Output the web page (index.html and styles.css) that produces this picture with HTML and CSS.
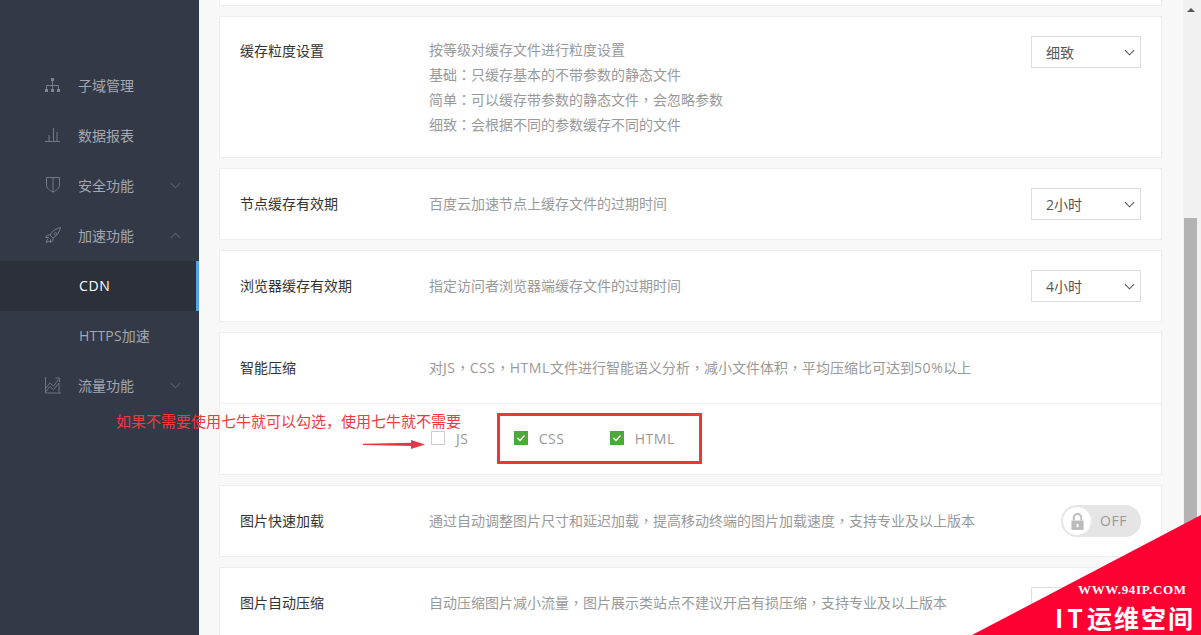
FILE: index.html
```html
<!DOCTYPE html>
<html lang="zh-CN">
<head>
<meta charset="utf-8">
<title>CDN</title>
<link rel="stylesheet" href="styles.css">
</head>
<body>
<div class="app">
  <nav class="sidebar">
    <a class="nav-item"><svg class="nav-icon" viewBox="0 0 16 18"><path d="M6 2h3v3H6zM0 13h3v3H0zM6 13h3v3H6zM12 13h3v3h-3z" fill="#7f8590"/><path d="M7.500 5v8M1.500 13V9.500h12V13" fill="none" stroke="#7f8590" stroke-width=".9"/></svg><span>子域管理</span></a>
    <a class="nav-item"><svg class="nav-icon" viewBox="0 0 16 18"><path d="M0 15.500h15M4 15V9M8.500 15V2M12 15V6" fill="none" stroke="#747a86"/></svg><span>数据报表</span></a>
    <a class="nav-item"><svg class="nav-icon" viewBox="0 0 16 18"><path d="M1.500 1.500h13v7.500c0 3-3 5.500-6.500 7C4.500 14.500 1.500 12 1.500 9zM8 1.500V16" fill="none" stroke="#747a86"/></svg><span>安全功能</span><svg class="chevron" viewBox="0 0 12 7"><path d="M1 1l5 5 5-5" fill="none" stroke="#596070" stroke-width="1.200"/></svg></a>
    <a class="nav-item"><svg class="nav-icon" viewBox="0 0 16 18"><path d="M15.500 1.500C10.500 2.500 7 5.500 5 9l3 3c3.500-2 6.500-5.500 7.500-10.500zM5 9H2.500L0.500 11.500h3.300M8 12v2.500L5.500 16.500v-3.300M3 12.500L1 16.500l4-1.500M10.500 6.500a1.300 1.300 0 1 0 .1 0z" fill="none" stroke="#747a86"/></svg><span>加速功能</span><svg class="chevron" viewBox="0 0 12 7"><path d="M1 6l5-5 5 5" fill="none" stroke="#596070" stroke-width="1.200"/></svg></a>
    <a class="nav-item nav-active"><span class="en">CDN</span></a>
    <a class="nav-item nav-sub"><span><span class="en">HTTPS</span>加速</span></a>
    <a class="nav-item"><svg class="nav-icon" viewBox="0 0 16 18"><path d="M0.500 1v16h15.500M1 12l4-5 3.500 3 5-6.500M1 15.500l4-5 3.500 3 5.500-6.500v9.500M10.500 2h4v4" fill="none" stroke="#747a86" stroke-width=".9"/></svg><span>流量功能</span><svg class="chevron" viewBox="0 0 12 7"><path d="M1 1l5 5 5-5" fill="none" stroke="#596070" stroke-width="1.200"/></svg></a>
  </nav>

  <main class="content">
    <div class="card card-stub"></div>

    <section class="card">
      <div class="row row-top row-tall">
        <h3 class="label">缓存粒度设置</h3>
        <div class="desc desc-lines">
          <p>按等级对缓存文件进行粒度设置</p>
          <p>基础<span class="pn" lang="zh-TW">：</span>只缓存基本的不带参数的静态文件</p>
          <p>简单<span class="pn" lang="zh-TW">：</span>可以缓存带参数的静态文件<span class="pn" lang="zh-TW">，</span>会忽略参数</p>
          <p>细致<span class="pn" lang="zh-TW">：</span>会根据不同的参数缓存不同的文件</p>
        </div>
        <div class="select"><span>细致</span><svg class="select-arrow" viewBox="0 0 12 7"><path d="M1 1l5 5 5-5" fill="none" stroke="#555" stroke-width="1.200"/></svg></div>
      </div>
    </section>

    <section class="card">
      <div class="row">
        <h3 class="label">节点缓存有效期</h3>
        <div class="desc"><p>百度云加速节点上缓存文件的过期时间</p></div>
        <div class="select"><span>2小时</span><svg class="select-arrow" viewBox="0 0 12 7"><path d="M1 1l5 5 5-5" fill="none" stroke="#555" stroke-width="1.200"/></svg></div>
      </div>
    </section>

    <section class="card">
      <div class="row">
        <h3 class="label">浏览器缓存有效期</h3>
        <div class="desc"><p>指定访问者浏览器端缓存文件的过期时间</p></div>
        <div class="select"><span>4小时</span><svg class="select-arrow" viewBox="0 0 12 7"><path d="M1 1l5 5 5-5" fill="none" stroke="#555" stroke-width="1.200"/></svg></div>
      </div>
    </section>

    <section class="card">
      <div class="row row-plain">
        <h3 class="label">智能压缩</h3>
        <div class="desc"><p>对<span class="en">JS</span><span class="pn" lang="zh-TW">，</span><span class="en">CSS</span><span class="pn" lang="zh-TW">，</span><span class="en">HTML</span>文件进行智能语义分析<span class="pn" lang="zh-TW">，</span>减小文件体积<span class="pn" lang="zh-TW">，</span>平均压缩比可达到<span class="en">50%</span>以上</p></div>
      </div>
      <div class="row-options">
        <label class="option"><i class="box"></i><span class="en">JS</span></label>
        <label class="option"><i class="box box-on"><svg viewBox="0 0 14 14"><path d="M3.500 7l2.500 2.500 4.500-5" fill="none" stroke="#fff" stroke-width="1.300"/></svg></i><span class="en">CSS</span></label>
        <label class="option"><i class="box box-on"><svg viewBox="0 0 14 14"><path d="M3.500 7l2.500 2.500 4.500-5" fill="none" stroke="#fff" stroke-width="1.300"/></svg></i><span class="en">HTML</span></label>
      </div>
    </section>

    <section class="card">
      <div class="row">
        <h3 class="label">图片快速加载</h3>
        <div class="desc"><p>通过自动调整图片尺寸和延迟加载<span class="pn" lang="zh-TW">，</span>提高移动终端的图片加载速度<span class="pn" lang="zh-TW">，</span>支持专业及以上版本</p></div>
        <div class="toggle">
          <span class="knob"><svg viewBox="0 0 16 20"><path d="M4 9V6a4 4 0 0 1 8 0v3" fill="none" stroke="#bbb" stroke-width="2"/><path d="M1.500 9h13v10h-13z" fill="#bbb"/><path d="M7 12.500h2v3.500H7z" fill="#fff"/></svg></span>
          <span class="toggle-text">OFF</span>
        </div>
      </div>
    </section>

    <section class="card">
      <div class="row">
        <h3 class="label">图片自动压缩</h3>
        <div class="desc"><p>自动压缩图片减小流量<span class="pn" lang="zh-TW">，</span>图片展示类站点不建议开启有损压缩<span class="pn" lang="zh-TW">，</span>支持专业及以上版本</p></div>
        <div class="select select-hidden"></div>
      </div>
    </section>
  </main>

  <div class="scrollbar">
    <i class="scroll-up"></i>
    <i class="scroll-thumb"></i>
  </div>
</div>

<div class="note-text">如果不需要使用七牛就可以勾选，使用七牛就不需要</div>
<svg class="note-arrow" viewBox="0 0 62 12"><path d="M0 5.700L48 4.800V2l14 4.500L48 11V8L0 7z" fill="#e8383d"/></svg>
<div class="note-box"></div>

<div class="watermark">
  <svg class="watermark-bg" viewBox="0 0 229 120"><path d="M229 0V120H0z" fill="#ff0033"/></svg>
  <div class="wm-url">WWW.94IP.COM</div>
  <div class="wm-name"><span class="wm-it">IT</span>运维空间</div>
</div>
</body>
</html>
```
FILE: styles.css
```css
* { box-sizing: border-box; }
html, body { margin: 0; height: 100%; overflow: hidden; }
body {
  font-family: "Open Sans", "Noto Sans CJK SC", sans-serif;
  font-size: 14px;
  color: #333;
  background: #f8f8f8;
}
p, h3 { margin: 0; font-weight: 400; }

.en { letter-spacing: .6px; }
.pn { font-family: "Noto Sans CJK TC", sans-serif; }

.app { display: flex; height: 635px; overflow: hidden; }

.sidebar {
  flex: 0 0 199px;
  padding-top: 61px;
  background: #333947;
}
.nav-item {
  display: flex;
  align-items: center;
  height: 50px;
  padding: 0 0 2px 45px;
  color: #a4a8b0;
  font-size: 14px;
}
.nav-icon { width: 16px; height: 18px; margin-right: 17px; flex: none; }
.chevron { width: 11px; height: 7px; margin-left: 36px; flex: none; }
.nav-active {
  padding-left: 79px;
  background: #2b303b;
  border-right: 3px solid #4ea5ea;
  color: #fff;
}
.nav-sub { padding-left: 79px; }
.nav-sub .en { letter-spacing: .2px; }

.content { flex: 0 0 984px; padding: 0 21px 0 20px; }

.card {
  margin-bottom: 10px;
  background: #fff;
  border: 1px solid #eeeeee;
}
.card-stub { height: 6px; border-top: 0; }

.row {
  display: flex;
  align-items: center;
  height: 70px;
  padding: 0 20px;
}
.row-top { align-items: flex-start; padding-top: 19px; }
.row-tall { height: 140px; }
.row-plain { height: 70px; }

.label { flex: 0 0 190px; margin-top: -1px; color: #333; font-size: 14px; line-height: 32px; }
.desc { flex: 1; margin: -1px 0 0 -1px; color: #999; font-size: 14px; line-height: 25px; }
.desc-lines { margin-top: 0; padding-top: 1px; }

.select {
  display: flex;
  align-items: center;
  justify-content: space-between;
  flex: 0 0 110px;
  height: 32px;
  padding: 0 5px 0 14px;
  border: 1px solid #ddd;
  color: #555;
  background: #fff;
}
.select-arrow { width: 11px; height: 7px; }

.row-options {
  display: flex;
  align-items: center;
  gap: 45px;
  height: 70px;
  padding-left: 211px;
  border-top: 1px solid #eeeeee;
  color: #999;
  box-sizing: content-box;
}
.option { display: flex; align-items: center; margin-top: -2px; }
.box {
  display: block;
  width: 14px;
  height: 14px;
  margin-right: 11px;
  border: 1px solid #ccc;
  background: #fff;
}
.box-on { border: 0; background: #4fa83d; }
.box svg { display: block; width: 14px; height: 14px; }

.toggle {
  display: flex;
  align-items: center;
  flex: 0 0 80px;
  height: 32px;
  padding-left: 2px;
  border-radius: 16px;
  background: #e5e5e5;
}
.knob {
  display: flex;
  align-items: center;
  justify-content: center;
  width: 28px;
  height: 28px;
  border-radius: 50%;
  background: #fff;
}
.knob svg { width: 15px; height: 19px; }
.toggle-text { margin: -2px 0 0 9px; color: #999; font-size: 14px; letter-spacing: .6px; }

.scrollbar { flex: 0 0 18px; background: #f1f1f1; padding-left: 1px; }
.scroll-up {
  display: block;
  width: 0;
  height: 0;
  margin: 8px 0 0 3px;
  border-left: 4px solid transparent;
  border-right: 4px solid transparent;
  border-bottom: 4px solid #555;
}
.scroll-thumb { display: block; width: 13px; height: 417px; margin-top: 206px; background: #b3b3b3; }

.note-text {
  position: absolute;
  left: 116px;
  top: 410px;
  color: #ee3a3f;
  font-family: "Noto Sans CJK SC", sans-serif;
  font-size: 15px;
  line-height: 22px;
  white-space: nowrap;
}
.note-arrow { position: absolute; left: 363px; top: 438px; width: 62px; height: 12px; }
.note-box {
  position: absolute;
  left: 497px;
  top: 413px;
  width: 205px;
  height: 51px;
  border: 3px solid #e8383d;
}

.watermark { position: absolute; left: 972px; top: 515px; width: 229px; height: 120px; color: #fff; }
.watermark-bg { display: block; width: 229px; height: 120px; }
.wm-url {
  position: absolute;
  left: 106px;
  top: 67px;
  font-family: "Liberation Serif", serif;
  font-weight: 700;
  font-size: 13px;
  line-height: 16px;
  letter-spacing: .65px;
  white-space: nowrap;
}
.wm-name {
  position: absolute;
  left: 83px;
  top: 84px;
  font-family: "Noto Sans CJK SC", sans-serif;
  font-weight: 700;
  font-size: 25px;
  line-height: 36px;
  letter-spacing: 2px;
  white-space: nowrap;
}
.wm-it { letter-spacing: 4px; }
```
